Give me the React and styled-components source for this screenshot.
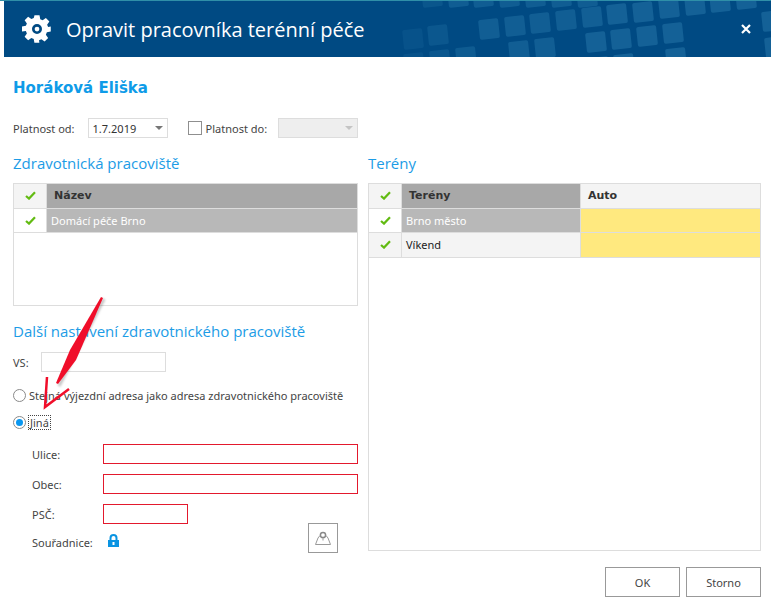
import React from 'react';
import styled, { createGlobalStyle } from 'styled-components';

const GlobalStyle = createGlobalStyle`
  html, body {
    margin: 0;
    padding: 0;
    background: #fff;
  }
  body {
    font-family: "Noto Sans", "Liberation Sans", sans-serif;
    font-size: 11px;
    color: #444;
  }
`;

const Page = styled.div`
  position: relative;
  width: 775px;
  height: 608px;
  overflow: hidden;
  background: #fff;
`;

const TopLine = styled.div`
  width: 771px;
  height: 1px;
  background: #2f8fa8;
`;

const Header = styled.header`
  position: relative;
  margin-left: 4px;
  width: 767px;
  height: 56px;
  background: #004a83;
  display: flex;
  align-items: center;
  padding: 0 20px 0 18px;
  box-sizing: border-box;
  overflow: hidden;
`;

const Pattern = styled.svg`
  position: absolute;
  left: 0;
  top: 0;
`;

const Title = styled.h1`
  position: relative;
  margin: 0 0 0 14px;
  flex: 1;
  font-family: "Open Sans", sans-serif;
  font-size: 20px;
  font-weight: 400;
  color: #fff;
`;

const Content = styled.div`
  padding: 22px 14px 0 13px;
`;

const Name = styled.h2`
  margin: 0;
  height: 18px;
  line-height: 18px;
  font-family: "DejaVu Sans", sans-serif;
  font-size: 15px;
  font-weight: 700;
  color: #0e9be8;
`;

const ValidityRow = styled.div`
  display: flex;
  align-items: center;
  height: 20px;
  margin-top: 21px;
`;

const Label = styled.span`
  font-size: 11px;
  color: #444;
`;

const Combo = styled.div`
  width: 80px;
  height: 20px;
  box-sizing: border-box;
  border: 1px solid #ddd;
  background: ${p => (p.$disabled ? '#eee' : '#fff')};
  color: #333;
  display: flex;
  align-items: center;
  justify-content: space-between;
  padding: 0 4px;
  margin-left: ${p => p.$left}px;
`;

const Caret = styled.span`
  width: 0;
  height: 0;
  border-left: 4px solid transparent;
  border-right: 4px solid transparent;
  border-top: 4px solid ${p => (p.$disabled ? '#c4c4c4' : '#777')};
`;

const CheckBox = styled.span`
  width: 12px;
  height: 12px;
  border: 1px solid #8f8f8f;
  margin-left: 20px;
  margin-right: 4px;
`;

const Columns = styled.div`
  display: grid;
  grid-template-columns: 345px 393px;
  column-gap: 10px;
  margin-top: 14px;
`;

const Column = styled.div`
  display: flex;
  flex-direction: column;
`;

const SectionTitle = styled.h3`
  margin: 0;
  height: 22px;
  line-height: 22px;
  font-family: "Open Sans", sans-serif;
  font-size: 15px;
  font-weight: 400;
  color: #1c9ce6;
`;

const Grid = styled.div`
  margin-top: 9px;
  height: ${p => p.$height}px;
  box-sizing: border-box;
  border: 1px solid #ddd;
  background: #fff;
`;

const GridRow = styled.div`
  display: grid;
  grid-template-columns: ${p => p.$columns};
  height: 24.5px;
  box-sizing: border-box;
  border-bottom: 1px solid #ddd;
`;

const Cell = styled.div`
  display: flex;
  align-items: center;
  padding-left: ${p => (p.$head ? 7 : 4)}px;
  border-left: ${p => (p.$first ? 'none' : '1px solid #ddd')};
  background: ${p => p.$bg};
  color: ${p => p.$color};
  font-family: ${p => (p.$head ? '"DejaVu Sans", sans-serif' : 'inherit')};
  font-size: 11px;
  font-weight: ${p => (p.$head ? 700 : 400)};
`;

const CheckCell = styled(Cell)`
  justify-content: center;
  padding-left: 0;
`;

const SubSection = styled.div`
  margin-top: 14px;
`;

const VsRow = styled.div`
  display: flex;
  align-items: center;
  height: 20px;
  margin-top: 10px;
`;

const VsInput = styled.div`
  width: 125px;
  height: 20px;
  box-sizing: border-box;
  border: 1px solid #ddd;
  margin-left: 12px;
`;

const RadioRow = styled.div`
  display: flex;
  align-items: center;
  height: 14px;
  margin-top: ${p => p.$top}px;
`;

const Radio = styled.span`
  width: 13px;
  height: 13px;
  box-sizing: border-box;
  border: 1px solid #8a8a8a;
  border-radius: 50%;
  margin-right: 3px;
  display: flex;
  align-items: center;
  justify-content: center;
  &::after {
    content: '';
    display: ${p => (p.$on ? 'block' : 'none')};
    width: 7px;
    height: 7px;
    border-radius: 50%;
    background: #0a97f0;
  }
`;

const FocusLabel = styled.span`
  outline: 1px dotted #444;
  line-height: 13px;
  padding: 0 1px;
`;

const Address = styled.div`
  margin-top: 15px;
  padding-left: 19px;
  display: flex;
  flex-direction: column;
  gap: 10px;
`;

const AddressRow = styled.div`
  display: flex;
  align-items: center;
`;

const AddressLabel = styled.span`
  width: 71px;
  font-size: 11px;
  color: #444;
`;

const RedInput = styled.div`
  width: ${p => p.$width}px;
  height: 20px;
  box-sizing: border-box;
  border: 1px solid #e3192d;
`;

const CoordRow = styled.div`
  display: flex;
  align-items: flex-end;
  height: 30px;
  margin-top: -11px;
  padding-bottom: 0;
`;

const CoordValue = styled.div`
  display: flex;
  align-items: flex-end;
  height: 22px;
  padding-bottom: 3px;
  box-sizing: border-box;
`;

const MapButton = styled.button`
  width: 30px;
  height: 30px;
  padding: 0;
  margin-left: auto;
  margin-right: 20px;
  box-sizing: border-box;
  background: #fff;
  border: 1px solid #999;
  display: flex;
  align-items: center;
  justify-content: center;
`;

const Footer = styled.div`
  display: flex;
  justify-content: flex-end;
  gap: 6px;
  margin-top: 14px;
`;

const FooterButton = styled.button`
  width: ${p => p.$width}px;
  height: 30px;
  box-sizing: border-box;
  background: #fff;
  border: 1px solid #999;
  font-family: inherit;
  font-size: 11px;
  color: #444;
`;

const Arrow = styled.svg`
  position: absolute;
  left: 0;
  top: 0;
  pointer-events: none;
`;

const squares = [
  [37, -14, 0.5], [63, -14, 0.8], [88, -14, 0.8], [114, -14, 0.8], [140, -14, 0.8], [166, -14, 0.8], [192, -14, 0.8],
  [18, 28, 0.35], [43, 24, 0.55], [94, 18, 0.85], [120, 15, 0.85], [145, 12, 0.85], [171, 9, 0.85], [197, 6, 0.9],
  [222, 3, 1], [248, 1, 1], [274, -3, 1], [300, -6, 1], [325, -9, 1], [351, -12, 1], [377, 10, 1],
  [124, 40, 0.85], [150, 37, 0.85], [201, 31, 1], [226, 28, 1], [252, 25, 1], [278, 22, 1], [380, 36, 1],
  [19, 52, 0.35], [45, 49, 0.55], [71, 46, 0.7], [204, 56, 1], [229, 53, 1], [281, 47, 1],
];

const Gear = () => (
  <svg width="30" height="30" viewBox="0 0 24 24" style={{ position: 'relative' }}>
    <path
      fill="#fff"
      fillRule="evenodd"
      d="M10 1h4l.6 3.1 1.9.8 2.6-1.8 2.8 2.8-1.8 2.6.8 1.9L23 10v4l-3.1.6-.8 1.9 1.8 2.6-2.8 2.8-2.6-1.8-1.9.8L13.9 23h-4l-.5-3.1-1.9-.8-2.6 1.8-2.8-2.8 1.8-2.6-.8-1.9L0 13.9v-4l3.1-.5.8-1.9L2.1 4.9l2.8-2.8 2.6 1.8 1.9-.8zM12 8a4 4 0 1 0 0 8 4 4 0 0 0 0-8z"
    />
    <circle cx="12" cy="12" r="1.9" fill="#fff" />
  </svg>
);

const Close = () => (
  <svg width="10" height="10" viewBox="0 0 10 10" style={{ position: 'relative' }}>
    <path d="M1 1l8 8M9 1l-8 8" stroke="#fff" strokeWidth="2.2" />
  </svg>
);

const Check = () => (
  <svg width="11" height="9" viewBox="0 0 11 9">
    <path d="M1 5l3 2.6L10 1.2" fill="none" stroke="#62bb12" strokeWidth="2.2" />
  </svg>
);

const Lock = () => (
  <svg width="11" height="13" viewBox="0 0 11 13">
    <path fill="#0a94e2" fillRule="evenodd" d="M0 6h1.5V4a4 4 0 0 1 8 0v2H11v7H0zM3.5 6h4V4a2 2 0 0 0-4 0zM4.5 8v3h2V8z" />
  </svg>
);

const MapPin = () => (
  <svg width="16" height="15" viewBox="0 0 16 15">
    <circle cx="8" cy="4" r="2.6" fill="none" stroke="#888" strokeWidth="1.5" />
    <path d="M8 7v2.5M5 4.5L3 7l-2.5 6.5h15L13 7l-2-2.5" fill="none" stroke="#999" strokeWidth="1" />
  </svg>
);

const App = () => {
  const leftCols = '32px 1fr';
  const rightCols = '32px 179px 1fr';

  return (
    <Page>
      <GlobalStyle />
      <TopLine />
      <Header>
        <Pattern width="767" height="56">
          <g transform="translate(381 0)">
            {squares.map(([x, y, o], i) => (
              <rect
                key={i}
                x={x}
                y={y}
                width="20"
                height="20"
                rx="2"
                fill="#1b6a9e"
                opacity={o * 0.75}
                transform={`rotate(-6 ${x + 10} ${y + 10})`}
              />
            ))}
          </g>
        </Pattern>
        <Gear />
        <Title>Opravit pracovníka terénní péče</Title>
        <Close />
      </Header>
      <Content>
        <Name>Horáková Eliška</Name>
        <ValidityRow>
          <Label>Platnost od:</Label>
          <Combo $left={13}>
            1.7.2019
            <Caret />
          </Combo>
          <CheckBox />
          <Label>Platnost do:</Label>
          <Combo $left={11} $disabled>
            <span />
            <Caret $disabled />
          </Combo>
        </ValidityRow>
        <Columns>
          <Column>
            <SectionTitle>Zdravotnická pracoviště</SectionTitle>
            <Grid $height={123}>
              <GridRow $columns={leftCols}>
                <CheckCell $first $bg="#f4f4f4"><Check /></CheckCell>
                <Cell $head $bg="#a8a8a8" $color="#333">Název</Cell>
              </GridRow>
              <GridRow $columns={leftCols}>
                <CheckCell $first $bg="#fff"><Check /></CheckCell>
                <Cell $bg="#b8b8b8" $color="#fff">Domácí péče Brno</Cell>
              </GridRow>
            </Grid>
            <SubSection>
              <SectionTitle>Další nastavení zdravotnického pracoviště</SectionTitle>
              <VsRow>
                <Label>VS:</Label>
                <VsInput />
              </VsRow>
              <RadioRow $top={16}>
                <Radio />
                <Label>Stejná výjezdní adresa jako adresa zdravotnického pracoviště</Label>
              </RadioRow>
              <RadioRow $top={13}>
                <Radio $on />
                <FocusLabel>Jiná</FocusLabel>
              </RadioRow>
              <Address>
                <AddressRow>
                  <AddressLabel>Ulice:</AddressLabel>
                  <RedInput $width={255} />
                </AddressRow>
                <AddressRow>
                  <AddressLabel>Obec:</AddressLabel>
                  <RedInput $width={255} />
                </AddressRow>
                <AddressRow>
                  <AddressLabel>PSČ:</AddressLabel>
                  <RedInput $width={85} />
                </AddressRow>
                <CoordRow>
                  <CoordValue>
                    <AddressLabel>Souřadnice:</AddressLabel>
                    <span style={{ marginLeft: 5 }}><Lock /></span>
                  </CoordValue>
                  <MapButton aria-label="Mapa"><MapPin /></MapButton>
                </CoordRow>
              </Address>
            </SubSection>
          </Column>
          <Column>
            <SectionTitle>Terény</SectionTitle>
            <Grid $height={368}>
              <GridRow $columns={rightCols}>
                <CheckCell $first $bg="#f4f4f4"><Check /></CheckCell>
                <Cell $head $bg="#a8a8a8" $color="#333">Terény</Cell>
                <Cell $head $bg="#f4f4f4" $color="#333">Auto</Cell>
              </GridRow>
              <GridRow $columns={rightCols}>
                <CheckCell $first $bg="#fff"><Check /></CheckCell>
                <Cell $bg="#b8b8b8" $color="#fff">Brno město</Cell>
                <Cell $bg="#ffe97f" />
              </GridRow>
              <GridRow $columns={rightCols}>
                <CheckCell $first $bg="#f4f4f4"><Check /></CheckCell>
                <Cell $bg="#f4f4f4" $color="#222">Víkend</Cell>
                <Cell $bg="#ffe97f" />
              </GridRow>
            </Grid>
          </Column>
        </Columns>
        <Footer>
          <FooterButton $width={75}>OK</FooterButton>
          <FooterButton $width={75}>Storno</FooterButton>
        </Footer>
      </Content>
      <Arrow width="775" height="608">
        <defs>
          <filter id="soft" x="-30%" y="-30%" width="160%" height="160%">
            <feGaussianBlur stdDeviation="1.2" />
          </filter>
        </defs>
        <g transform="translate(2 2)" opacity="0.35" filter="url(#soft)">
          <path d="M102 297L57 384" stroke="#555" strokeWidth="3" fill="none" />
        </g>
        <path d="M101 297L103 298L76 360L58 384L56 383L70 350Z" fill="#f00e2a" />
        <path d="M47 377L45 407L69 389" fill="none" stroke="#f00e2a" strokeWidth="2.5" />
      </Arrow>
    </Page>
  );
};

export default App;
